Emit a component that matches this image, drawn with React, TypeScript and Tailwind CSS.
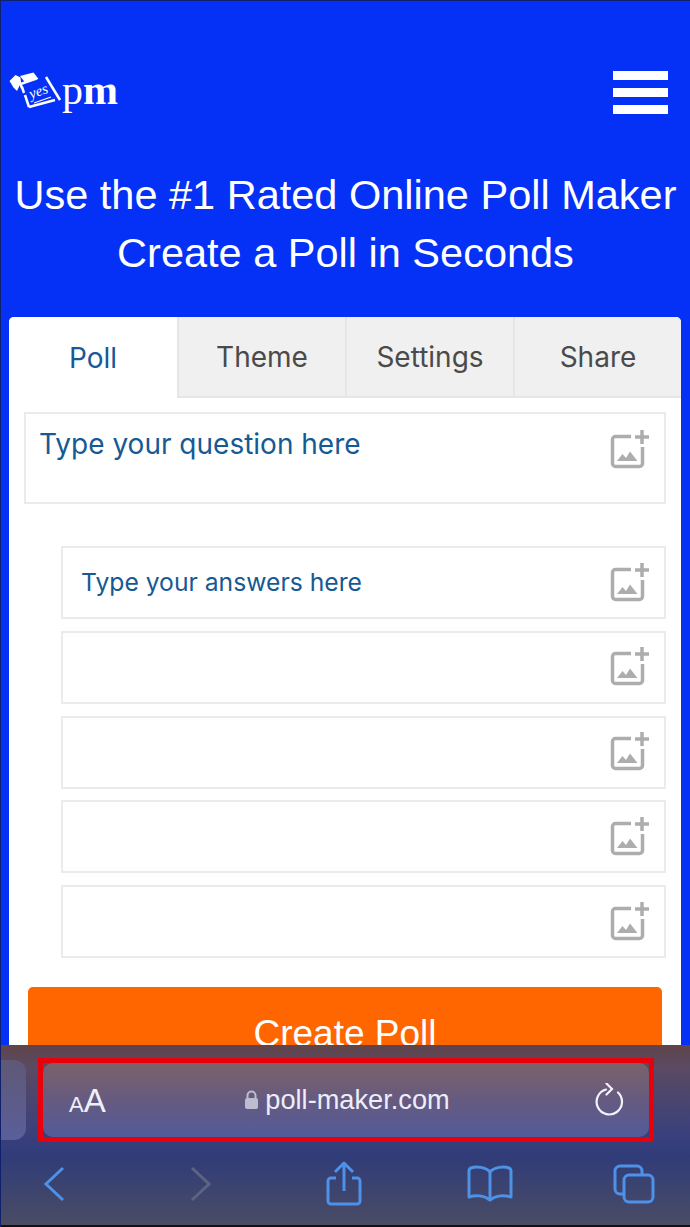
import React from "react";

const ANSWERS = ["Type your answers here", "", "", "", ""];
const TABS = ["Theme", "Settings", "Share"];

function AddImageIcon() {
  return (
    <svg width="40" height="40" viewBox="0 0 40 40" fill="none" className="shrink-0">
      <path d="M21 6.500H5.500a3 3 0 0 0-3 3v24a3 3 0 0 0 3 3h24a3 3 0 0 0 3-3V17" stroke="#adadad" strokeWidth="3.500" />
      <path d="M32 0v14M25 7h14" stroke="#adadad" strokeWidth="3.500" />
      <path d="M7 31l5.500-7 3.500 4 4-6.500 7.500 9.500z" fill="#adadad" />
    </svg>
  );
}

function Logo() {
  return (
    <div className="flex h-[40px] items-start">
      <svg width="61" height="40" viewBox="1 23 61 40" fill="none">
        <path d="M9.500 32l6-6 5 2.500 0.500 5-4 8.500-3.500-3.500z" fill="#fff" />
        <path d="M20 27l13.500-3.500 5 6.500-13.500 3.500z" fill="#fff" />
        <path d="M22 39l-1.500-4 16-5.500" stroke="#fff" strokeWidth="2.500" />
        <path d="M24 44l-2-6M29 58l-4-12M29 58l26-7" stroke="#fff" strokeWidth="2.500" />
        <path d="M46 28l14 23" stroke="#fff" strokeWidth="2.500" />
        <text x="31" y="50" transform="rotate(-20 31 50)" fill="#fff" fontSize="15" fontFamily="'Liberation Serif', serif" fontStyle="italic">yes</text>
        <path d="M34 54l17-6" stroke="#fff" strokeWidth="1.200" />
      </svg>
      <span className="mt-[-3px] font-['Liberation_Serif',serif] text-[42px] leading-none text-white">
        p<span className="font-bold">m</span>
      </span>
    </div>
  );
}

function AnswerRow({ text }: { text: string }) {
  return (
    <div className="flex h-[73px] items-center justify-between border-2 border-[#ebebeb] bg-white pr-[14px] pl-[18px]">
      <span className="text-[24.700px] text-[#155a94]">{text}</span>
      <AddImageIcon />
    </div>
  );
}

function BrowserBar() {
  return (
    <div className="absolute right-0 bottom-0 left-0 h-[182px] border-b-2 border-b-[#111] bg-[linear-gradient(180deg,#5f4449_0%,#5b4a63_12%,#39407c_50%,#303c78_62%,#4a4c64_100%)]">
      <div className="absolute top-[15px] left-[-20px] h-[80px] w-[45px] rounded-xl bg-[linear-gradient(180deg,#5f5876_0%,#5a5f9a_100%)]" />
      <div className="relative mt-[13px] ml-[37px] w-[616px] border-[5px] border-[#e8000b]">
        <div className="relative flex h-[74px] items-center justify-between rounded-[10px] bg-[linear-gradient(180deg,#7b6269_0%,#665a80_50%,#525b9a_100%)] pr-[24px] pl-[26px]">
          <span className="flex w-[36px] items-baseline text-[#eef0fa]">
            <span className="text-[22px] leading-none">A</span>
            <span className="text-[33px] leading-none">A</span>
          </span>
          <span className="mr-[6px] flex items-center gap-[6px] text-[27.200px] text-[#eceef8]">
            <svg width="15" height="20" viewBox="0 0 15 20" fill="none">
              <path d="M3.500 9V5.500a4 4 0 0 1 8 0V9" stroke="#bdbdd2" strokeWidth="2" />
              <rect x="1" y="8" width="13" height="11" rx="2" fill="#bdbdd2" />
            </svg>
            poll-maker.com
          </span>
          <svg width="30" height="34" viewBox="0 0 30 34" fill="none" stroke="#f2f3fa" strokeWidth="2.200" strokeLinecap="round">
            <path d="M11 6.500a12.700 12.700 0 1 0 12 3" />
            <path d="M11.500 0.500l5.500 5.500-5.500 5.500" />
          </svg>
        </div>
      </div>
      <div className="mt-[18px] flex h-[48px] items-center pl-[42px]">
        <svg width="22" height="36" viewBox="0 0 22 36" fill="none" stroke="#4d91e8" strokeWidth="3">
          <path d="M20 2L3 18l17 16" />
        </svg>
        <svg width="22" height="36" viewBox="0 0 22 36" fill="none" stroke="#5d6482" strokeWidth="3" className="ml-[125px]">
          <path d="M2 2l17 16L2 34" />
        </svg>
        <svg width="36" height="46" viewBox="0 0 36 46" fill="none" stroke="#4d91e8" strokeWidth="3" className="ml-[114px]" strokeLinejoin="round">
          <path d="M10 17H5a3 3 0 0 0-3 3v20a3 3 0 0 0 3 3h26a3 3 0 0 0 3-3V20a3 3 0 0 0-3-3h-5" />
          <path d="M18 30V3M9 11l9-9 9 9" />
        </svg>
        <svg width="46" height="38" viewBox="0 0 46 38" fill="none" stroke="#4d91e8" strokeWidth="3" className="ml-[105px]" strokeLinejoin="round">
          <path d="M23 7C19 2 9 1 4 3c-1 .4-2 1-2 3v26c6-2 15-2 21 3 6-5 15-5 21-3V6c0-2-1-2.600-2-3-5-2-15-1-19 4z" />
          <path d="M23 7v28" />
        </svg>
        <svg width="42" height="40" viewBox="0 0 42 40" fill="none" stroke="#4d91e8" strokeWidth="3" className="ml-[100px]">
          <rect x="11" y="11" width="29" height="27" rx="5" />
          <path d="M11 30H7a5 5 0 0 1-5-5V7a5 5 0 0 1 5-5h17a5 5 0 0 1 5 5v4" />
        </svg>
      </div>
    </div>
  );
}

export default function App() {
  return (
    <div className="relative h-[1227px] w-[690px] overflow-hidden border-t border-l border-[#10206a] bg-[#0431f5] font-['Liberation_Sans',sans-serif]">
      <header className="flex h-[182px] items-center justify-between pr-[22px]">
        <Logo />
        <div className="flex w-[55px] flex-col gap-[8px]">
          <div className="h-[9px] bg-white" />
          <div className="h-[9px] bg-white" />
          <div className="h-[9px] bg-white" />
        </div>
      </header>
      <h1 className="mt-[-17px] text-center text-[41.500px] leading-[58px] text-white">
        Use the #1 Rated Online Poll Maker
        <br />
        Create a Poll in Seconds
      </h1>
      <main className="mx-[8px] mt-[35px] h-[800px] w-[672px] rounded-t-[5px] bg-white font-['Inter',sans-serif]">
        <div className="flex h-[81px]">
          <div className="flex w-[169px] items-center justify-center rounded-tl-[5px] bg-white text-[28px] text-[#155a94]">Poll</div>
          {TABS.map((t, i) => (
            <div
              key={t}
              className={`flex w-[169px] items-center justify-center border-b-2 border-l-2 border-[#e6e6e6] bg-[#f0f0f0] text-[28px] text-[#4a4a4a] ${i === 2 ? "rounded-tr-[5px]" : ""}`}
            >
              {t}
            </div>
          ))}
        </div>
        <div className="px-[15px] pt-[14px]">
          <div className="flex h-[92px] justify-between border-2 border-[#ebebeb] pt-[12px] pr-[14px] pl-[13px]">
            <span className="text-[28px] leading-[36px] text-[#155a94]">Type your question here</span>
            <div className="pt-[4px]">
              <AddImageIcon />
            </div>
          </div>
          <div className="mt-[42px] ml-[37px] flex flex-col gap-[11.750px]">
            {ANSWERS.map((a, i) => (
              <AnswerRow key={i} text={a} />
            ))}
          </div>
          <button className="mt-[29px] ml-[4px] flex h-[90px] w-[634px] justify-center rounded-[5px] bg-[#ff6600] pt-[19px] font-['Liberation_Sans',sans-serif] text-[37px] text-white">
            Create Poll
          </button>
        </div>
      </main>
      <BrowserBar />
    </div>
  );
}
